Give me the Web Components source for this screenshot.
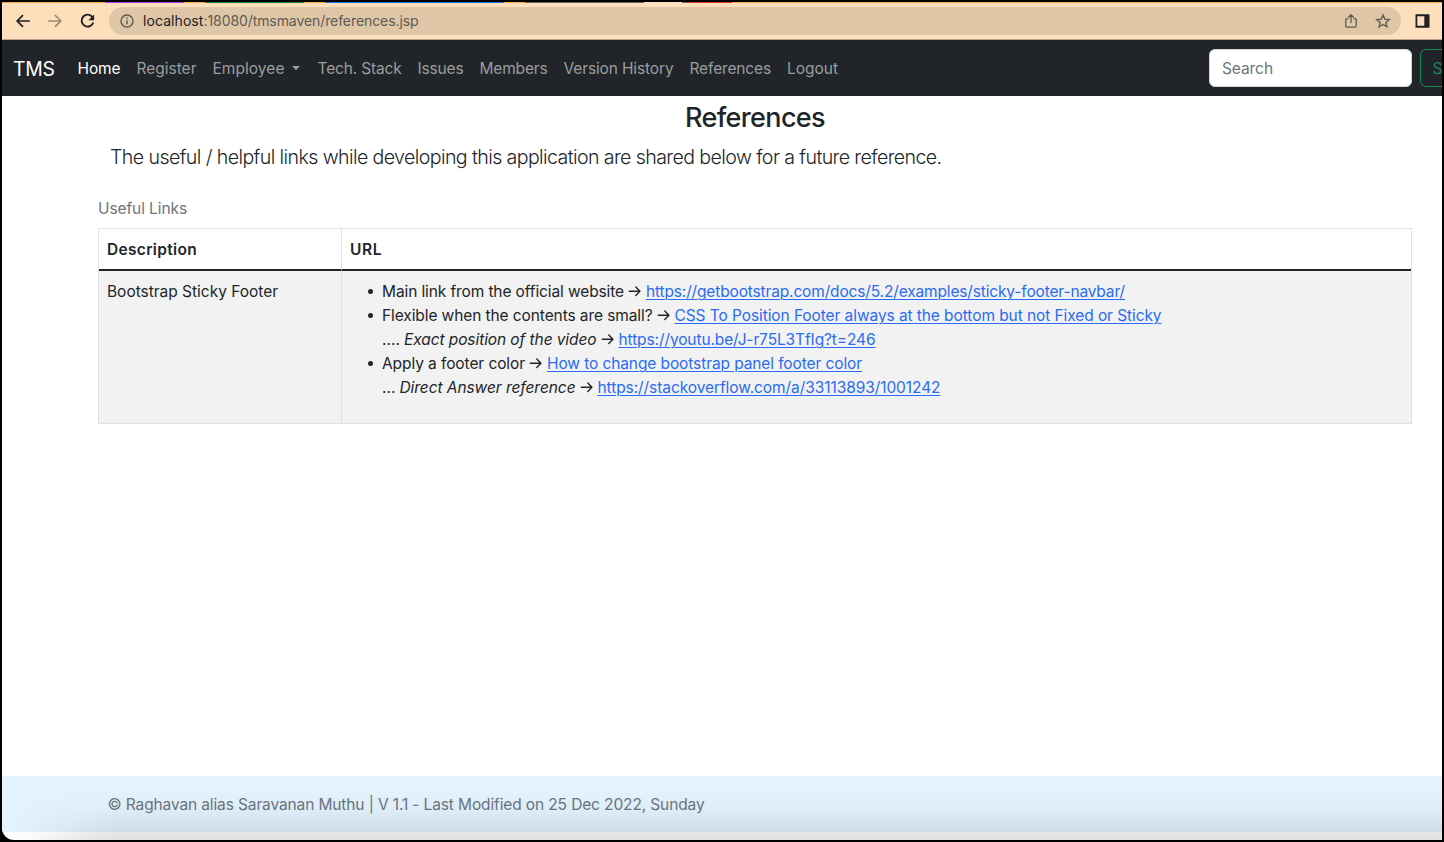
<!DOCTYPE html>
<html lang="en">
<head>
<meta charset="utf-8">
<title>References</title>
<style>
html,body{margin:0;height:100%;background:#000;overflow:hidden}
body{font:15.5px/24px Inter,"Liberation Sans",sans-serif;color:#212529}
</style>
</head>
<body>
<app-window>
  <browser-bar slot="bar"></browser-bar>
  <site-nav slot="nav"></site-nav>
  <reference-page slot="page"></reference-page>
  <site-footer slot="foot"></site-footer>
</app-window>
<script>
class Base extends HTMLElement {
  constructor() {
    super();
    this.attachShadow({ mode: "open" }).innerHTML = this.constructor.html;
  }
}

// One run of text, tracked so that it fills the width given in `w`.
class TextRun extends Base {
  static html = `<style>:host{display:inline-block;white-space:pre;flex:none;vertical-align:top}span{display:inline-block;vertical-align:top;padding-top:var(--drop,1px);margin-bottom:calc(-1 * var(--drop,1px));text-decoration:inherit}</style><span><slot></slot></span>`;
  connectedCallback() {
    const w = parseFloat(this.getAttribute("w"));
    const span = this.shadowRoot.querySelector("span");
    const n = this.textContent.length;
    const natural = span.getBoundingClientRect().width;
    if (w && n && natural) {
      span.style.letterSpacing = ((w - natural) / n).toFixed(4) + "px";
      this.style.width = w + "px";
    }
  }
}

class AppWindow extends Base {
  static html = `<style>
    :host{display:block;box-sizing:border-box;width:1444px;height:842px;padding:2px;background:#000}
    .win{position:relative;display:flex;flex-direction:column;height:838px;background:#fff;border-bottom-left-radius:12px;overflow:hidden}
    ::slotted([slot=page]){flex:1}
    .shade{position:absolute;left:0;right:0;bottom:0;height:52px;pointer-events:none;
      background:linear-gradient(to bottom,transparent,rgba(0,0,0,.02) 40%,rgba(0,0,0,.08) 80%,rgba(0,0,0,.13));
      -webkit-mask-image:linear-gradient(100deg,transparent 16px,#000 120px);mask-image:linear-gradient(100deg,transparent 16px,#000 120px)}
  </style><div class="win"><slot name="bar"></slot><slot name="nav"></slot><slot name="page"></slot><slot name="foot"></slot><div class="shade"></div></div>`;
}

class BrowserBar extends Base {
  static html = `<style>
    :host{--drop:0px;display:block;height:38px;background:#fde0bb;box-sizing:border-box;border-bottom:1px solid #b7a58d;font-size:14px;line-height:20px;color:#202124}
    .tabs{height:1px;background:linear-gradient(to right,#f7aa48 103px,#a142f4 103px 182px,#f7aa48 182px 203px,#188038 203px 302px,#f7aa48 302px 323px,#1a73e8 323px 502px,#f7aa48 502px 523px,#5f6368 523px 642px,#fde0bb 642px 680px,#5f6368 680px 687px,#d93025 687px 730px,#f7aa48 730px)}
    .row{display:flex;align-items:center;height:36px;padding:0 12px 0 13px;box-sizing:border-box}
    svg{display:block;flex:none;fill:none;stroke:currentColor;stroke-width:1.7}
    .back{margin-right:16px}.fwd{color:#9b8c78;margin-right:16px}.re{margin-right:13px}
    .url{display:flex;align-items:center;flex:1;height:28px;border-radius:14px;background:#dec6a7;padding:0 10px;box-sizing:border-box;color:#5f5b54}
    .info{margin-right:8px}.host{color:#202124}.sp{flex:1}
    .share{margin-right:16px}.side{margin-left:14px;color:#202124}
  </style>
  <div class="tabs"></div>
  <div class="row">
    <svg class="back" width="16" height="16" viewBox="0 0 16 16"><path d="M14.8 8H2.5M8 2.2 2.2 8 8 13.8"/></svg>
    <svg class="fwd" width="16" height="16" viewBox="0 0 16 16"><path d="M1.2 8h12.3M8 2.2 13.8 8 8 13.8"/></svg>
    <svg class="re" width="17" height="16" viewBox="0 0 17 16"><path d="M13.6 4.3A6 6 0 1 0 14.3 9.5" stroke-width="1.9"/><path d="M15.1 1.5v5.7H9.4z" fill="currentColor" stroke="none"/></svg>
    <div class="url">
      <svg class="info" width="16" height="16" viewBox="0 0 16 16"><circle cx="8" cy="8" r="6" style="stroke-width:1.4"/><path d="M8 7.2v4M8 4.5v1.5" style="stroke-width:1.5"/></svg>
      <text-run w="60.5" class="host">localhost</text-run><text-run w="215">:18080/tmsmaven/references.jsp</text-run>
      <span class="sp"></span>
      <svg class="share" width="16" height="16" viewBox="0 0 16 16"><path style="stroke-width:1.3" d="M5.3 5.7H3.9q-1.1 0-1.1 1.1v6.3q0 1.1 1.1 1.1h8.2q1.1 0 1.1-1.1V6.8q0-1.1-1.1-1.1h-1.4M8 10V2M5.2 4.5 8 1.7l2.8 2.8"/></svg>
      <svg width="16" height="16" viewBox="0 0 16 16"><path style="stroke-width:1.4" d="m8 2 1.75 4.1 4.5.4-3.4 2.95 1.05 4.4L8 11.5l-3.9 2.35 1.05-4.4L1.75 6.5l4.5-.4z"/></svg>
    </div>
    <svg class="side" width="15" height="14" viewBox="0 0 15 14"><path fill="currentColor" stroke="none" fill-rule="evenodd" d="M.5.3h14v13.4H.5zM2.3 2.3v9.4h7V2.3z"/></svg>
  </div>`;
}

class SiteNav extends Base {
  static html = `<style>
    :host{display:flex;align-items:center;box-sizing:border-box;height:56px;background:#212529;padding-left:11px;overflow:hidden;color:#9b9d9e}
    .brand{font-size:19.4px;color:#fff;margin-right:23px}
    nav{display:flex;gap:16px;align-items:center;flex:1}
    .on{color:#fff}
    .drop{display:flex;align-items:center;gap:7px;width:89px}
    i{border:4.8px solid transparent;border-top-color:currentColor;border-bottom:0}
    .in{box-sizing:border-box;width:203px;height:38px;border:1px solid #ced4da;border-radius:6px;background:#fff;padding:6px 12px;color:#6c757d}
    .btn{box-sizing:border-box;flex:none;width:75px;height:38px;margin:0 -53px 0 8px;border:1px solid #198754;border-radius:6px;padding:6px 11.5px;color:#198754}
  </style>
  <text-run class="brand" w="41.5">TMS</text-run>
  <nav>
    <text-run class="on" w="43">Home</text-run><text-run w="60">Register</text-run>
    <span class="drop"><text-run w="72">Employee</text-run><i></i></span>
    <text-run w="84">Tech. Stack</text-run><text-run w="46">Issues</text-run><text-run w="68">Members</text-run>
    <text-run w="110">Version History</text-run><text-run w="81.5">References</text-run><text-run w="51">Logout</text-run>
  </nav>
  <div class="in"><text-run w="51">Search</text-run></div>
  <div class="btn"><text-run w="9.4">S</text-run></div>`;
}

class ReferencePage extends Base {
  static html = `<style>
    :host{display:block;padding:5px 30px 0 96px}
    h3{--drop:0px;margin:0 0 7px;text-align:center;font-size:27px;line-height:34px;font-weight:500}
    .lead{--drop:0px;font-size:19.6px;line-height:30px;font-weight:300;padding-left:12px;margin-bottom:24px}
    .cap{color:#6c757d;margin-bottom:8px}
    .table{display:grid;grid-template-columns:242px 1fr;border:1px solid #dee2e6;height:195.5px;grid-template-rows:40px 1fr;box-sizing:border-box}
    .table>div{padding:8px}
    .table>div:nth-child(even){border-left:1px solid #dee2e6}
    .th{font-weight:600}
    .th{border-bottom:2px solid #212529}
    .td{background:#f2f2f2;margin-top:2px}
    .table>.th{height:24px;border-left-color:#dee2e6}
    ul{margin:0;padding:0 0 0 32px;list-style:none}
    li{position:relative}
    li::before{content:"";position:absolute;left:-14px;top:10px;width:5px;height:5px;border-radius:50%;background:currentColor}
    .l{display:flex;gap:4px;height:24px}
    a{color:#2b6bf3;text-decoration:underline;text-underline-offset:2px;text-decoration-thickness:1.4px;display:block}
    a text-run{text-decoration:underline;text-decoration-thickness:1.4px}
    em{display:block}
  </style>
  <h3><text-run w="140">References</text-run></h3>
  <div class="lead"><text-run w="831.5">The useful / helpful links while developing this application are shared below for a future reference.</text-run></div>
  <div class="cap"><text-run w="89">Useful Links</text-run></div>
  <div class="table">
    <div class="th"><text-run w="90">Description</text-run></div><div class="th"><text-run w="32">URL</text-run></div>
    <div class="td"><text-run w="171">Bootstrap Sticky Footer</text-run></div>
    <div class="td"><ul>
      <li><div class="l"><text-run w="242">Main link from the official website</text-run><arrow-mark></arrow-mark><a><text-run w="479">https://getbootstrap.com/docs/5.2/examples/sticky-footer-navbar/</text-run></a></div></li>
      <li><div class="l"><text-run w="270.5">Flexible when the contents are small?</text-run><arrow-mark></arrow-mark><a><text-run w="487">CSS To Position Footer always at the bottom but not Fixed or Sticky</text-run></a></div>
      <div class="l"><text-run w="18">....</text-run><em><text-run w="192.5">Exact position of the video</text-run></em><arrow-mark></arrow-mark><a><text-run w="257">https://youtu.be/J-r75L3TfIg?t=246</text-run></a></div></li>
      <li><div class="l"><text-run w="143">Apply a footer color</text-run><arrow-mark></arrow-mark><a><text-run w="315">How to change bootstrap panel footer color</text-run></a></div>
      <div class="l"><text-run w="13.5">...</text-run><em><text-run w="176">Direct Answer reference</text-run></em><arrow-mark></arrow-mark><a><text-run w="343">https://stackoverflow.com/a/33113893/1001242</text-run></a></div></li>
    </ul></div>
  </div>`;
}

class ArrowMark extends Base {
  static html = `<style>:host{display:block;width:14px;height:24px;flex:none}svg{display:block}</style>
  <svg width="14" height="24" viewBox="0 0 14 24" fill="none" stroke="currentColor" stroke-width="1.4" stroke-linecap="round" stroke-linejoin="round"><path d="M1.3 12.3h10.4M7.8 8.1l4.1 4.2-4.1 4.2"/></svg>`;
}

class SiteFooter extends Base {
  static html = `<style>
    :host{display:block;height:56px;margin-bottom:8px;box-sizing:border-box;background:#e3f2fd;padding:16px 0 0 105.5px;color:#6c757d}
  </style><text-run w="597">© Raghavan alias Saravanan Muthu | V 1.1 - Last Modified on 25 Dec 2022, Sunday</text-run>`;
}

customElements.define("app-window", AppWindow);
customElements.define("browser-bar", BrowserBar);
customElements.define("site-nav", SiteNav);
customElements.define("arrow-mark", ArrowMark);
customElements.define("reference-page", ReferencePage);
customElements.define("site-footer", SiteFooter);
customElements.define("text-run", TextRun);
</script>
</body>
</html>
